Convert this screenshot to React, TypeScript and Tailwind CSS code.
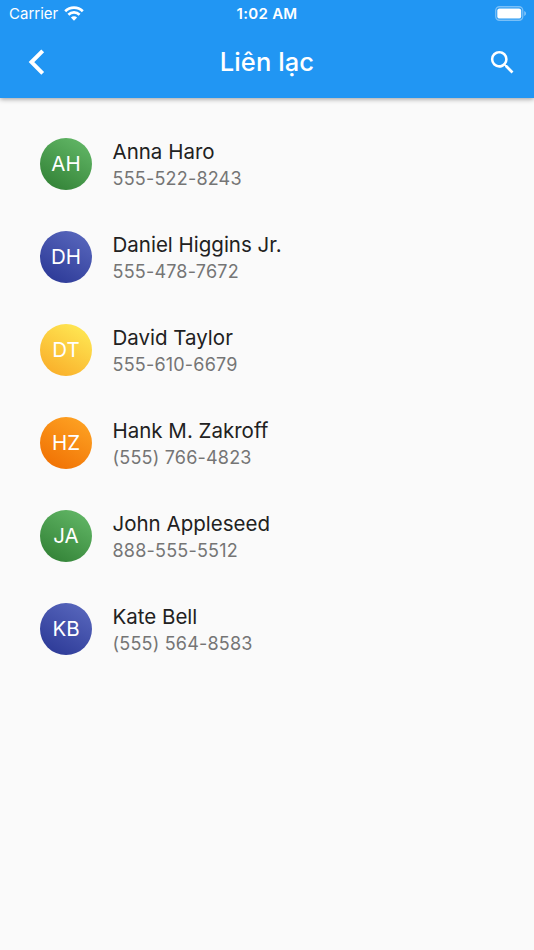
import clsx from 'clsx';

interface Contact {
  name: string;
  initials: string;
  phone: string;
  gradient: string;
}

const GREEN = 'from-[#2e7d32] to-[#66bb6a]';
const INDIGO = 'from-[#283593] to-[#5c6bc0]';
const YELLOW = 'from-[#f9a825] to-[#ffee58]';
const ORANGE = 'from-[#ef6c00] to-[#ffa726]';

const CONTACTS: Contact[] = [
  { name: 'Anna Haro', initials: 'AH', phone: '555-522-8243', gradient: GREEN },
  { name: 'Daniel Higgins Jr.', initials: 'DH', phone: '555-478-7672', gradient: INDIGO },
  { name: 'David Taylor', initials: 'DT', phone: '555-610-6679', gradient: YELLOW },
  { name: 'Hank M. Zakroff', initials: 'HZ', phone: '(555) 766-4823', gradient: ORANGE },
  { name: 'John Appleseed', initials: 'JA', phone: '888-555-5512', gradient: GREEN },
  { name: 'Kate Bell', initials: 'KB', phone: '(555) 564-8583', gradient: INDIGO },
];

function WifiIcon() {
  return (
    <svg width="20" height="15" viewBox="0 0 20 15" fill="none" stroke="currentColor" strokeWidth="2.7">
      <path d="M1.2 5.3a12.6 12.6 0 0 1 17.6 0" />
      <path d="M4.4 8.7a8 8 0 0 1 11.2 0" />
      <path d="M10 14.8 6.9 11.6a4.4 4.4 0 0 1 6.2 0z" fill="currentColor" stroke="none" />
    </svg>
  );
}

function BatteryIcon() {
  return (
    <svg width="32" height="15" viewBox="0 0 32 15" fill="none">
      <rect x="0.75" y="0.75" width="27" height="13.5" rx="3.7" stroke="white" strokeOpacity="0.4" strokeWidth="1.3" />
      <rect x="2.3" y="2.4" width="23.9" height="10.2" rx="2.2" fill="white" />
      <path d="M29.3 5v5c1-.4 1.6-1.4 1.6-2.5s-.6-2.1-1.6-2.5z" fill="white" fillOpacity="0.5" />
    </svg>
  );
}

function StatusBar() {
  return (
    <div className="grid h-[26px] grid-cols-3 items-center pr-[7px] pl-[9px] text-[15px] leading-none">
      <div className="flex items-center gap-[6px]">
        <span>Carrier</span>
        <WifiIcon />
      </div>
      <span className="pr-[2px] text-center font-semibold tracking-[0.3px]">1:02 AM</span>
      <div className="flex justify-end">
        <BatteryIcon />
      </div>
    </div>
  );
}

function Header() {
  return (
    <header className="h-[98px] bg-[#2196f3] text-white shadow-[0_1px_5px_rgba(0,0,0,0.4)]">
      <StatusBar />
      <div className="grid h-[72px] grid-cols-[100px_1fr_100px] items-center">
        <button type="button" aria-label="Quay lại" className="pl-[28px]">
          <svg width="18" height="26" viewBox="0 0 18 26" fill="none" stroke="currentColor" strokeWidth="4">
            <path d="M14.7 1.9 3.5 13.1 14.7 24.3" />
          </svg>
        </button>
        <h1 className="text-center text-[25.5px] leading-none font-medium tracking-[0.1px]">Liên lạc</h1>
        <button type="button" aria-label="Tìm kiếm" className="flex justify-end pr-[16px]">
          <svg width="31" height="31" viewBox="0 0 24 24" fill="currentColor">
            <path d="M15.5 14h-.79l-.28-.27A6.471 6.471 0 0 0 16 9.5 6.5 6.5 0 1 0 9.5 16c1.61 0 3.09-.59 4.23-1.57l.27.28v.79l5 4.99L20.49 19l-4.99-5zm-6 0C7.01 14 5 11.99 5 9.5S7.01 5 9.5 5 14 7.01 14 9.5 11.99 14 9.5 14z" />
          </svg>
        </button>
      </div>
    </header>
  );
}

function ContactRow({ contact }: { contact: Contact }) {
  return (
    <li className="flex h-[93px] items-center gap-[20.5px] px-10">
      <div
        className={clsx(
          'grid size-[52px] shrink-0 place-items-center rounded-full bg-linear-[30deg] pt-[2px] text-[20.5px] leading-none text-white',
          contact.gradient,
        )}
      >
        {contact.initials}
      </div>
      <div className="pt-[3px]">
        <p className="text-[20.5px] leading-[26px] text-[#212121]">{contact.name}</p>
        <p className="text-[18px] leading-[27px] tracking-[0.2px] text-[#757575]">{contact.phone}</p>
      </div>
    </li>
  );
}

export default function App() {
  return (
    <div className="flex h-screen flex-col overflow-hidden bg-[#fafafa] font-[Inter,sans-serif]">
      <Header />
      <ul className="pt-[19px]">
        {CONTACTS.map((contact) => (
          <ContactRow key={contact.name} contact={contact} />
        ))}
      </ul>
    </div>
  );
}
